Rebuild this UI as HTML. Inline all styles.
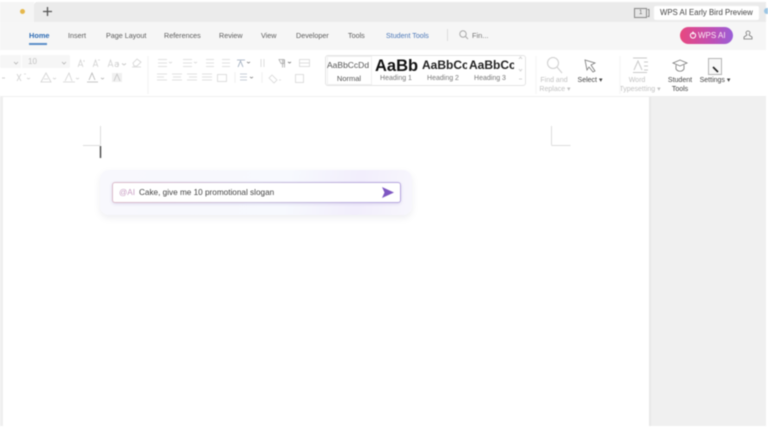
<!DOCTYPE html>
<html><head><meta charset="utf-8">
<style>
html,body{margin:0;padding:0;background:#fff}
#r{position:relative;width:768px;height:432px;overflow:hidden;background:#fff;font-family:"Liberation Sans",sans-serif;filter:blur(.45px)}
.a{position:absolute}
.t{position:absolute;white-space:nowrap;font-size:7.4px;color:#5c5c5c;line-height:10px}
.c{position:absolute;white-space:nowrap;font-size:7px;color:#555;line-height:9px;text-align:center;transform:translateX(-50%)}
svg{position:absolute;left:0;top:0}
</style></head><body><div id="r">
<div class="a" style="left:0;top:2px;width:34px;height:20px;background:#f5f5f5"></div>
<div class="a" style="left:34px;top:2px;width:732px;height:20px;background:#ebebeb;border-radius:3px 0 0 0"></div>
<div class="a" style="left:0;top:22px;width:766px;height:28px;background:#f6f6f6"></div>
<div class="a" style="left:0;top:96px;width:766px;height:1px;background:#efefef"></div>
<div class="a" style="left:649px;top:97px;width:117px;height:329px;background:#f0f0f0"></div>
<div class="a" style="left:649px;top:97px;width:2px;height:329px;background:#e8e8e8"></div>
<div class="a" style="left:0;top:97px;width:3px;height:329px;background:#efefef"></div>
<div class="a" style="left:20px;top:9px;width:5px;height:5px;border-radius:50%;background:#e5b84c"></div>
<div class="t" style="left:29px;top:31px;font-weight:bold;color:#2f6db5">Home</div>
<div class="a" style="left:29px;top:43px;width:18px;height:1.5px;background:#5b8fc9"></div>
<div class="t" style="left:68px;top:31px;font-size:7.2px">Insert</div>
<div class="t" style="left:106px;top:31px;font-size:7.2px">Page Layout</div>
<div class="t" style="left:164px;top:31px;font-size:7.2px">References</div>
<div class="t" style="left:219px;top:31px;font-size:7.2px">Review</div>
<div class="t" style="left:261px;top:31px;font-size:7.2px">View</div>
<div class="t" style="left:296px;top:31px;font-size:7.2px">Developer</div>
<div class="t" style="left:348px;top:31px;font-size:7.2px">Tools</div>
<div class="t" style="left:386px;top:31px;color:#4c78b8;font-size:7.1px">Student Tools</div>
<div class="a" style="left:447px;top:29px;width:1px;height:12px;background:#ddd"></div>
<div class="t" style="left:472px;top:31px;color:#777">Fin...</div>
<div class="a" style="left:634px;top:8px;width:13px;height:10px;border:1px solid #888;box-sizing:border-box;background:#e6e6e6"></div>
<div class="t" style="left:639px;top:8px;font-size:6px;line-height:10px;color:#666">1</div>
<div class="a" style="left:654px;top:6px;width:105px;height:14px;background:#fff;border-radius:2px"></div>
<div class="t" style="left:660px;top:8px;font-size:7.8px;color:#444">WPS AI Early Bird Preview</div>
<div class="a" style="left:680px;top:27px;width:53px;height:17px;border-radius:9px;background:linear-gradient(90deg,#e8487f,#c04fb4 60%,#9a5fd8)"></div>
<div class="t" style="left:698px;top:31px;color:#fbe9f4;font-size:8px">WPS AI</div>

<div class="a" style="left:0;top:55px;width:70px;height:13px;background:#f6f6f6;border-radius:2px"></div>
<div class="a" style="left:21px;top:55px;width:1px;height:13px;background:#fff"></div>
<div class="t" style="left:28px;top:57px;color:#c2c2c2;font-size:8px">10</div>

<div class="a" style="left:325px;top:55px;width:201px;height:31px;border:1px solid #e4e4e4;border-radius:3px;box-sizing:border-box"></div>
<div class="a" style="left:327px;top:56px;width:45px;height:29px;border:1px solid #f0f0f0;box-sizing:border-box"></div>
<div class="t" style="left:327px;top:60px;font-size:8.5px;color:#555">AaBbCcDd</div>
<div class="c" style="left:349px;top:74px;font-size:7.5px">Normal</div>
<div class="t" style="left:375px;top:57px;font-size:16.5px;line-height:18px;font-weight:bold;color:#111">AaBb</div>
<div class="c" style="left:396px;top:74px;color:#777">Heading 1</div>
<div class="a" style="left:422px;top:57px;width:45px;height:16px;overflow:hidden"><div class="t" style="left:0;top:0;font-size:12px;line-height:16px;font-weight:bold;color:#222">AaBbCc</div></div>
<div class="c" style="left:443px;top:74px;color:#777">Heading 2</div>
<div class="a" style="left:469px;top:57px;width:45px;height:16px;overflow:hidden"><div class="t" style="left:0;top:0;font-size:12px;line-height:16px;font-weight:bold;color:#222">AaBbCc</div></div>
<div class="c" style="left:490px;top:74px;color:#777">Heading 3</div>

<div class="c" style="left:554px;top:76px;color:#c2c2c2">Find and</div>
<div class="c" style="left:555px;top:85px;color:#c2c2c2">Replace ▾</div>
<div class="c" style="left:590px;top:76px;color:#444">Select ▾</div>
<div class="c" style="left:637px;top:76px;color:#c2c2c2">Word</div>
<div class="c" style="left:640px;top:85px;color:#c2c2c2">Typesetting ▾</div>
<div class="c" style="left:680px;top:76px;color:#444">Student</div>
<div class="c" style="left:680px;top:85px;color:#444">Tools</div>
<div class="c" style="left:715px;top:76px;color:#444">Settings ▾</div>

<svg width="768" height="432" viewBox="0 0 768 432" fill="none">
<!-- plus -->
<path d="M43 11.500h9M47.500 7v9" stroke="#555" stroke-width="1.300"/>
<!-- tab icons -->
<circle cx="463" cy="34" r="3.200" stroke="#aaa"/><path d="M465.500 36.500l2.500 2.500" stroke="#aaa"/>
<path d="M647.500 9.500h1.500v7h-1.500" stroke="#888"/>
<circle cx="693" cy="35.500" r="2.600" stroke="#fff"/><path d="M693 31.500v3" stroke="#fff"/>
<path d="M748 31a2 2 0 0 1 2 2l-1 2 3 2v2h-8v-2l3-2-1-2a2 2 0 0 1 2-2z" stroke="#777" stroke-width=".8"/>
<circle cx="767" cy="11" r="3" fill="#9cc6e4"/>
<!-- font group -->
<g stroke="#d2d2d2" stroke-width=".8">
<path d="M14 62l2 2 2-2M62 62l2 2 2-2" stroke="#b4b4b4"/>
<path d="M2 78h3" stroke="#c4c4c4"/>
<path d="M78 67l2.500-7 2.500 7M79 65h3M84 60v2" />
<path d="M93 67l2.500-7 2.500 7M94 65h3M98 60h2" />
<path d="M108 67l2.500-7 2.500 7M109 65h3M115 63a2 2 0 1 1 3 3c-1 1-3 1-3-1 0-1 2-1 3-1M118 62v5"/>
<path d="M122 63.500l2 1.500 2-1.500" stroke="#c4c4c4"/>
<path d="M133 63l4-4 4 3-4 4h-3zM132 67h9"/>
<path d="M17 74l4 7M21 74l-4 7M24 74h2M27 78l1.500 1 1.500-1"/>
<path d="M41 82l5-9 5 9zM44 79h4M53 78l1.500 1 1.500-1"/>
<path d="M65 81l4-8 3 8M63 82h12M76 78l1.500 1 1.500-1"/>
<path d="M89 80l3-7 3 7M87 82h11M101 78l1.500 1 1.500-1" stroke="#b4b4b4"/>
<rect x="112" y="73" width="10" height="9" fill="#f0f0f0" stroke="none"/>
<path d="M114 81l3-7 3 7" stroke="#c4c4c4"/>
</g>
<path d="M148 56v38" stroke="#f2f2f2"/>
<!-- paragraph group -->
<g stroke="#d8d8d8" stroke-width=".8">
<path d="M158 59.500h9M158 63h9M158 66.500h9M169 62l1.500 1 1.500-1M183 59.500h9M183 63h9M183 66.500h9M194 62l1.500 1 1.500-1M206 59.500h8M206 63h8M206 66.500h8M222 59.500h8M222 63h8M222 66.500h8"/>
<path d="M157 74h10M157 77h7M157 80h10M172 74h10M173 77h8M172 80h10M187 74h10M189 77h8M187 80h10M202 74h10M202 77h10M202 80h10"/>
<rect x="217.500" y="74.500" width="9" height="7"/>
<path d="M240 74h7M240 77h7M240 80h7" stroke="#b8c0cc"/>
<path d="M250 77l1.500 1 1.500-1" stroke="#888"/>
<path d="M237 60h8M238 67l2.500-6 2.500 6" stroke="#9aa8ba"/>
<path d="M247 62l1.500 1 1.500-1" stroke="#888"/>
<path d="M261 59v8M264 59v8"/>
<path d="M279 59.500h5v4h-3zM282.500 59.500v8M284.500 59.500v8" stroke="#a8a8a8"/>
<path d="M288 62l1.500 1 1.500-1" stroke="#777"/>
<rect x="299.500" y="59.500" width="10" height="7"/><path d="M299.500 63h10"/>
<path d="M272 75l5 5-3 3-5-5zM279 80h2"/>
<rect x="295.500" y="74.500" width="8" height="8"/>
<path d="M262 72v11M235 72v11" stroke="#eee"/>
</g>
<path d="M536 56v38M620 56v38" stroke="#f5f5f5"/>
<!-- right icons -->
<circle cx="553" cy="63" r="5.500" stroke="#cecece"/><path d="M557 67l5 6" stroke="#cecece"/>
<path d="M585 60l10 3-4 2 4 6-2 1-4-5-2 3z" stroke="#777" stroke-width=".8"/>
<path d="M633 58h14M633 72.500h14M634 70l4-9 4 9M644 62h4M644 66h4M644 70h4" stroke="#cacaca"/>
<path d="M673 63l7-3 7 3-7 3zM676 65v4c2 3 6 3 8 0v-4" stroke="#777" stroke-width=".8"/>
<rect x="708.500" y="58.500" width="13" height="16" stroke="#b4b4b4" fill="#f8f8f8"/>
<path d="M713 67l5 5" stroke="#222" stroke-width="1.600"/>
<!-- styles scroll -->
<path d="M519 59l1.500-2 1.500 2M519 69l1.500 2 1.500-2M519 79h3" stroke="#d4d4d4"/>
<!-- margin marks -->
<path d="M100.500 126v19M83 145.500h17M551.500 126v19M551.500 145.500h19" stroke="#dcdcdc"/>
<path d="M100.500 146v12" stroke="#444" stroke-width="1.400"/>
</svg>

<!-- AI panel -->
<div class="a" style="left:100px;top:170px;width:312px;height:45px;border-radius:9px;background:linear-gradient(100deg,#f8f8fd 0%,#f7f9fe 60%,#f2eefc 82%,#f8f7fd 100%);box-shadow:0 3px 7px rgba(90,90,120,.10)"></div>
<div class="a" style="left:112px;top:182px;width:289px;height:21px;box-sizing:border-box;border-radius:3px;border:1px solid transparent;background:linear-gradient(#fff,#fff) padding-box,linear-gradient(90deg,#dcbccb,#c9c0dc 50%,#b6a6e0) border-box;box-shadow:0 1px 3px rgba(110,90,170,.18)"></div>
<div class="t" style="left:119px;top:187px;font-size:8.2px;line-height:11px;color:#c99fc4">@AI</div>
<div class="t" style="left:139px;top:187px;font-size:8.2px;line-height:11px;color:#444">Cake, give me 10 promotional slogan</div>
<svg width="768" height="432" viewBox="0 0 768 432"><path d="M382 187l12 5.500-12 5.500 2.500-5.500z" fill="#7e57c2"/></svg>
</div></body></html>
